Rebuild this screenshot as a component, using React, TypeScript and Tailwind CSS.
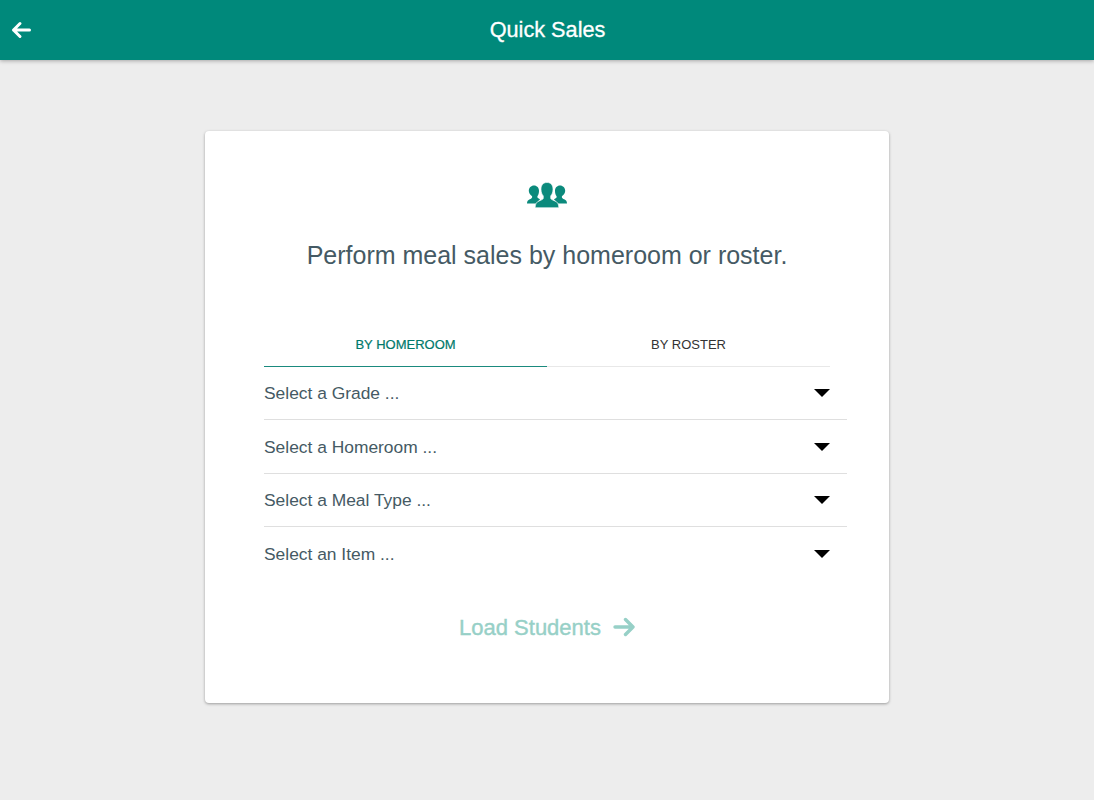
import React from 'react'

const selects = ['Select a Grade ...', 'Select a Homeroom ...', 'Select a Meal Type ...', 'Select an Item ...']

function ArrowLeft() {
  return (
    <svg width="20" height="18" viewBox="0 0 20 18" fill="none" stroke="#fff" strokeWidth="3" strokeLinecap="round" strokeLinejoin="round">
      <path d="M18.500 9H2.500M9 2.500L2.500 9L9 15.500" />
    </svg>
  )
}

function ArrowRight() {
  return (
    <svg width="22" height="20" viewBox="0 0 22 20" fill="none" stroke="#97d0c7" strokeWidth="3.4" strokeLinecap="round" strokeLinejoin="round">
      <path d="M2 10H20M12.500 2.500L20 10L12.500 17.500" />
    </svg>
  )
}

function PeopleIcon() {
  return (
    <svg width="40" height="26" viewBox="0 0 40 26" fill="#0b8a7c">
      <path d="M7 3.500c3 0 5 2.300 5 5.300 0 2.400-.6 4.200-1.600 5.400v1.300c.8.800 1.700 1.300 2.700 1.700L9 21.500H0c0-2.400 1-3.500 2.800-4.300 1.200-.5 1.900-1 2.300-1.800v-1.200C3 13 1.800 11 1.800 8.800c0-3 2.200-5.300 5.200-5.300z" />
      <path d="M33 3.500c-3 0-5 2.300-5 5.300 0 2.400.6 4.200 1.600 5.400v1.300c-.8.800-1.700 1.300-2.700 1.700l4.100 4.300h9c0-2.400-1-3.500-2.800-4.300-1.200-.5-1.900-1-2.300-1.800v-1.200C37 13 38.200 11 38.200 8.800c0-3-2.200-5.300-5.200-5.300z" />
      <path d="M20 .5c3.700 0 6 2.700 6 6.700 0 3-1 5.300-2.300 6.700v2.700c.8 1.100 2.400 1.700 4.200 2.400 2.500 1 3.800 2.500 3.900 6.700H8.200c.1-4.200 1.400-5.700 3.900-6.700 1.800-.7 3.400-1.300 4.200-2.400v-2.700C15 12.500 14 10.200 14 7.200 14 3.200 16.300.5 20 .5z" stroke="#fff" strokeWidth="0.6" />
    </svg>
  )
}

export default function App() {
  return (
    <div className="min-h-[800px] bg-[#ededed] font-['Liberation_Sans',Arial,sans-serif]">
      {/* header */}
      <div className="relative flex items-center justify-center h-[60px] bg-[#00897b] shadow-[0_1px_4px_rgba(0,0,0,0.3)]">
        <div className="absolute left-[11px] top-[21px]">
          <ArrowLeft />
        </div>
        <h1 className="pl-px text-[21.7px] text-white font-normal [-webkit-text-stroke:0.3px_#ffffff]">Quick Sales</h1>
      </div>

      {/* card */}
      <div className="w-[684px] h-[572px] mx-auto mt-[71px] bg-white rounded-[4px] shadow-[0_1px_3px_rgba(0,0,0,0.35)] pt-[51px] px-[59px]">
        <div className="flex justify-center">
          <PeopleIcon />
        </div>
        <p className="mt-[32px] text-center text-[25px] leading-[30px] text-[#455a64]">Perform meal sales by homeroom or roster.</p>

        {/* tabs */}
        <div className="flex w-[566px] h-[44px] mt-[53px] border-b border-[#e8e8e8] text-[13px]">
          <div className="relative w-[283px] h-[43px] flex items-center justify-center text-[#00796b] [-webkit-text-stroke:0.2px_#00796b]">
            BY HOMEROOM
            <span className="absolute left-0 right-0 bottom-[-1px] h-px bg-[#1a8a7e]" />
          </div>
          <div className="w-[283px] h-[43px] flex items-center justify-center text-[#333333]">BY ROSTER</div>
        </div>

        {/* selects */}
        <div className="w-[583px]">
          {selects.map((s, i) => (
            <div key={s} className={`flex items-center justify-between h-[53.4px] pr-[17px] ${i < 3 ? 'border-b border-[#dfdfdf]' : ''}`}>
              <span className="text-[17.4px] text-[#455a64]">{s}</span>
              <span className="w-0 h-0 border-x-[8px] border-x-transparent border-t-[8px] border-t-black" />
            </div>
          ))}
        </div>

        {/* load */}
        <div className="flex items-center justify-center gap-[12px] mt-[30px]">
          <span className="text-[22px] font-normal text-[#97d0c7] [-webkit-text-stroke:0.4px_#97d0c7]">Load Students</span>
          <ArrowRight />
        </div>
      </div>
    </div>
  )
}
